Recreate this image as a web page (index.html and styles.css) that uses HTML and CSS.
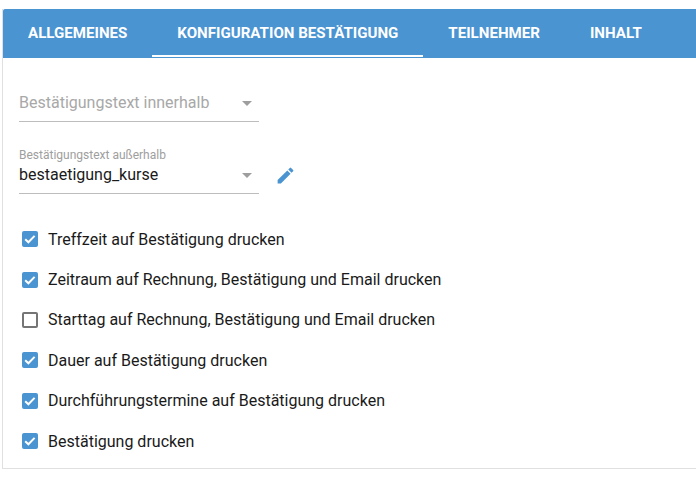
FILE: index.html
```html
<!DOCTYPE html>
<html lang="de">
<head>
    <meta charset="UTF-8">
    <title>Konfiguration Bestätigung</title>
    <link rel="stylesheet" href="styles.css">
</head>
<body>
    <div class="card">
        <nav class="tabs">
            <div class="tab">Allgemeines</div>
            <div class="tab active">Konfiguration Bestätigung</div>
            <div class="tab">Teilnehmer</div>
            <div class="tab">Inhalt</div>
        </nav>
        <main class="content">
            <div class="select-row">
                <div class="select empty">
                    <span class="select-value">Bestätigungstext innerhalb</span>
                    <span class="arrow"></span>
                </div>
            </div>
            <div class="select-row">
                <div class="select labelled">
                    <label class="select-label">Bestätigungstext außerhalb</label>
                    <span class="select-value">bestaetigung_kurse</span>
                    <span class="arrow"></span>
                </div>
                <svg class="edit-icon" viewBox="0 0 24 24" width="21" height="21">
                    <path d="M3 17.25V21h3.75L17.81 9.94l-3.75-3.75L3 17.25zM20.71 7.04a1 1 0 0 0 0-1.41l-2.34-2.34a1 1 0 0 0-1.41 0l-1.83 1.83 3.75 3.75 1.83-1.83z"/>
                </svg>
            </div>
            <div class="checks">
                <div class="check-row"><span class="box checked"><svg viewBox="0 0 16 16"><path d="M3.2 8.2l3.2 3.1 6.2-6.4"/></svg></span>Treffzeit auf Bestätigung drucken</div>
                <div class="check-row"><span class="box checked"><svg viewBox="0 0 16 16"><path d="M3.2 8.2l3.2 3.1 6.2-6.4"/></svg></span>Zeitraum auf Rechnung, Bestätigung und Email drucken</div>
                <div class="check-row"><span class="box"></span>Starttag auf Rechnung, Bestätigung und Email drucken</div>
                <div class="check-row"><span class="box checked"><svg viewBox="0 0 16 16"><path d="M3.2 8.2l3.2 3.1 6.2-6.4"/></svg></span>Dauer auf Bestätigung drucken</div>
                <div class="check-row"><span class="box checked"><svg viewBox="0 0 16 16"><path d="M3.2 8.2l3.2 3.1 6.2-6.4"/></svg></span>Durchführungstermine auf Bestätigung drucken</div>
                <div class="check-row"><span class="box checked"><svg viewBox="0 0 16 16"><path d="M3.2 8.2l3.2 3.1 6.2-6.4"/></svg></span>Bestätigung drucken</div>
            </div>
        </main>
    </div>
</body>
</html>
```

FILE: styles.css
```css
html, body {
    height: 100%;
}

body {
    margin: 0;
    overflow: hidden;
    background-color: #fff;
    font-family: 'Roboto', sans-serif;
    color: #1a1a1a;
}

.card {
    margin: 9px 0 0 2px;
    height: 460px;
    box-sizing: border-box;
    border-left: 1px solid #e0e0e0;
    border-bottom: 1px solid #e0e0e0;
}

.tabs {
    display: flex;
    height: 49px;
    background-color: #4a94d2;
    border-top-left-radius: 2px;
}

.tab {
    padding: 0 25px;
    height: 48px;
    line-height: 48px;
    box-sizing: border-box;
    font-size: 15.1px;
    font-weight: 700;
    color: #fff;
    text-transform: uppercase;
    white-space: nowrap;
}

.tab.active {
    border-bottom: 2px solid #fff;
}

.content {
    padding: 0 0 0 16px;
}

.select-row {
    display: flex;
    align-items: flex-end;
    margin-bottom: 25px;
}

.select-row:first-child {
    padding-top: 24px;
}

.select {
    position: relative;
    width: 240px;
    height: 40px;
    box-sizing: border-box;
    border-bottom: 1px solid #bdbdbd;
    display: flex;
    flex-direction: column;
    justify-content: flex-end;
}

.select.labelled {
    height: 47px;
}

.select-label {
    font-size: 12px;
    line-height: 14px;
    color: #9e9e9e;
    position: absolute;
    top: 1px;
    left: 0;
}

.select-value {
    font-size: 16px;
    line-height: 20px;
    padding-bottom: 8px;
}

.select.empty .select-value {
    color: #a8a8a8;
}

.arrow {
    position: absolute;
    right: 7px;
    bottom: 15px;
    width: 0;
    height: 0;
    border-left: 5px solid transparent;
    border-right: 5px solid transparent;
    border-top: 5px solid #9e9e9e;
}

.edit-icon {
    margin: 0 0 8px 16px;
    fill: #4a94d2;
}

.checks {
    display: flex;
    flex-direction: column;
    margin-top: 1.1px;
}

.check-row {
    display: flex;
    align-items: center;
    height: 40.4px;
    font-size: 16px;
    white-space: nowrap;
}

.box {
    width: 16px;
    height: 16px;
    margin: 0 10px 0 3px;
    box-sizing: border-box;
    border: 2px solid #757575;
    border-radius: 2px;
    flex-shrink: 0;
}

.box.checked {
    border: none;
    background-color: #4a94d2;
}

.box svg {
    display: block;
    fill: none;
    stroke: #fff;
    stroke-width: 2;
}
```
